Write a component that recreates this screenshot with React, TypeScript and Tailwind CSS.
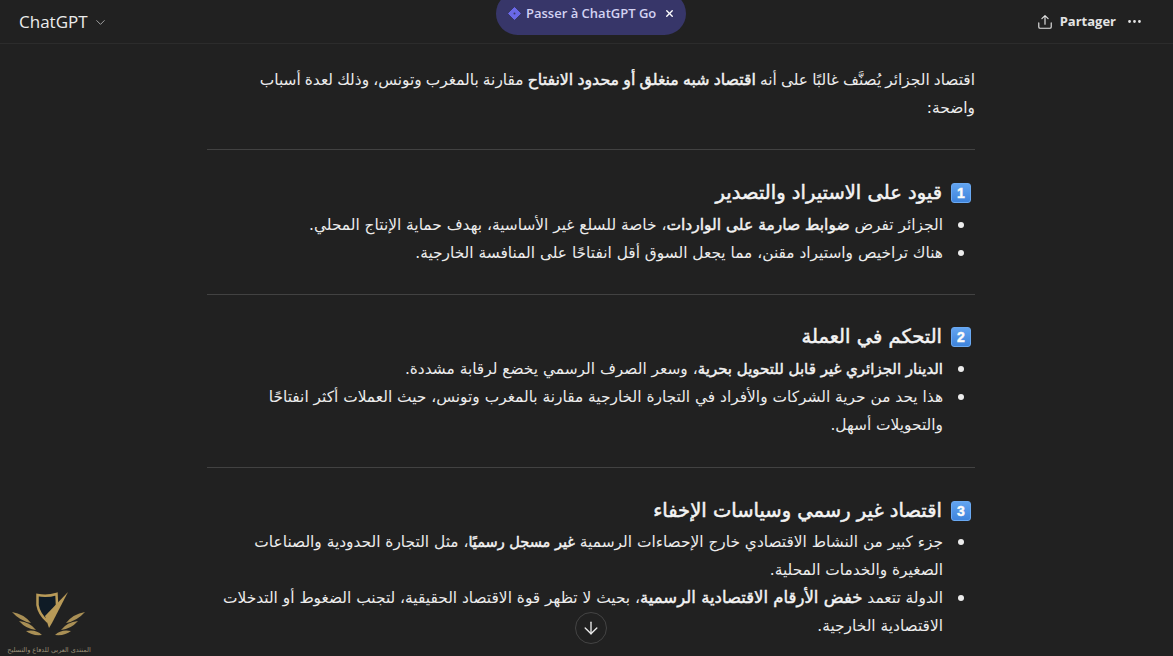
import { ChevronDown, ArrowDown, X, MoreHorizontal } from "lucide-react";

const NumBadge = ({ n }: { n: number }) => (
  <span className="mr-[4px] inline-flex h-[20px] w-[20px] shrink-0 items-center justify-center rounded-[3px] border border-[#6aa9f2] bg-gradient-to-b from-[#62a4f0] to-[#3f84dc] font-['Liberation_Sans',sans-serif] text-[14px] font-bold leading-none text-white">
    {n}
  </span>
);

const Heading = ({ n, children }: { n: number; children: React.ReactNode }) => (
  <h3 className="flex h-[28px] items-center gap-[9px] text-[19.5px] font-normal leading-[28px] text-[#f3f3f3] [-webkit-text-stroke:0.5px_#f3f3f3]">
    <NumBadge n={n} />
    <span>{children}</span>
  </h3>
);

const Strong = ({ children, size = "text-[15px]" }: { children: React.ReactNode; size?: string }) => (
  <span className={`${size} text-[#f3f3f3] [-webkit-text-stroke:0.45px_#f3f3f3]`}>{children}</span>
);

const Item = ({ children }: { children: React.ReactNode }) => (
  <li className="relative pr-[32px] leading-[28px]">
    <span className="absolute right-[11px] top-[11px] h-[6px] w-[6px] rounded-full bg-[#ececec]" />
    {children}
  </li>
);

const Divider = () => <hr className="border-t border-[#424242]" />;

const App = () => {
  return (
    <div className="relative h-[656px] w-[1173px] overflow-hidden bg-[#212121] font-['DejaVu_Sans',sans-serif] text-[#ececec]">
      {/* top bar */}
      <div className="relative flex h-[44px] items-center justify-between border-b border-[#2c2c2c] pl-[19px] pr-[30px] font-['Open_Sans',sans-serif]">
        <div className="flex items-center gap-[5px] text-[17px] text-[#ececec]">
          ChatGPT
          <ChevronDown size={15} strokeWidth={1.5} className="mt-[1px] text-[#a8a8a8]" />
        </div>
        <div className="absolute left-[496px] top-[-8px] flex h-[43px] w-[190px] items-center rounded-full bg-[#373669] pl-[12px] text-[13px] font-semibold text-[#d3d2f2]">
          <svg width="13" height="13" viewBox="0 0 13 13" className="mr-[5px]">
            <path d="M6.5 0.5 L12.5 6.5 L6.5 12.5 L0.5 6.5 Z" fill="#6a68e8" stroke="#6a68e8" strokeLinejoin="round" />
            <circle cx="6.5" cy="6.5" r="1" fill="#373669" />
          </svg>
          Passer à ChatGPT Go
          <X size={11} strokeWidth={3} className="ml-[8px] text-white" />
        </div>
        <div className="flex items-center">
          <svg width="16" height="18" viewBox="0 0 18 18" fill="none" stroke="#e4e4e4" strokeWidth="1.3" strokeLinecap="round" strokeLinejoin="round">
            <path d="M9 11.5V2M5.5 5.2 9 1.8l3.5 3.4M2 10v4.5a1.5 1.5 0 0 0 1.5 1.5h11a1.5 1.5 0 0 0 1.5-1.5V10" />
          </svg>
          <span className="ml-[7px] text-[13px] font-bold text-[#e4e4e4]">Partager</span>
          <MoreHorizontal size={17} strokeWidth={2} className="ml-[10px] text-[#e4e4e4]" />
        </div>
      </div>

      {/* conversation */}
      <div dir="rtl" className="ml-[207px] w-[768px] text-[15.4px] leading-[28px]">
        <p className="mt-[22px] [word-spacing:-0.8px]">
          اقتصاد الجزائر يُصنَّف غالبًا على أنه <Strong size="text-[15.8px]">اقتصاد شبه منغلق أو محدود الانفتاح</Strong> مقارنة بالمغرب وتونس، وذلك لعدة أسباب<br />واضحة:
        </p>
        <div className="mt-[27px]"><Divider /></div>

        <div className="mt-[29px]"><Heading n={1}>قيود على الاستيراد والتصدير</Heading></div>
        <ul className="mt-[4px]">
          <Item>الجزائر تفرض <Strong size="text-[15.5px]">ضوابط صارمة على الواردات</Strong>، خاصة للسلع غير الأساسية، بهدف حماية الإنتاج المحلي.</Item>
          <Item>هناك تراخيص واستيراد مقنن، مما يجعل السوق أقل انفتاحًا على المنافسة الخارجية.</Item>
        </ul>
        <div className="mt-[27px]"><Divider /></div>

        <div className="mt-[28px]"><Heading n={2}>التحكم في العملة</Heading></div>
        <ul className="mt-[4px]">
          <Item><Strong>الدينار الجزائري غير قابل للتحويل بحرية</Strong>، وسعر الصرف الرسمي يخضع لرقابة مشددة.</Item>
          <Item>هذا يحد من حرية الشركات والأفراد في التجارة الخارجية مقارنة بالمغرب وتونس، حيث العملات أكثر انفتاحًا<br />والتحويلات أسهل.</Item>
        </ul>
        <div className="mt-[28px]"><Divider /></div>

        <div className="mt-[29px]"><Heading n={3}>اقتصاد غير رسمي وسياسات الإخفاء</Heading></div>
        <ul className="mt-[3px]">
          <Item>جزء كبير من النشاط الاقتصادي خارج الإحصاءات الرسمية <Strong size="text-[14.5px]">غير مسجل رسميًا</Strong>، مثل التجارة الحدودية والصناعات<br />الصغيرة والخدمات المحلية.</Item>
          <Item>الدولة تتعمد <Strong size="text-[16.5px]">خفض الأرقام الاقتصادية الرسمية</Strong>، بحيث لا تظهر قوة الاقتصاد الحقيقية، لتجنب الضغوط أو التدخلات<br />الاقتصادية الخارجية.</Item>
        </ul>
      </div>

      {/* scroll down button */}
      <button className="absolute left-[575px] top-[612px] flex h-[32px] w-[32px] items-center justify-center rounded-full border border-[#444444] bg-[#212121]">
        <ArrowDown size={20} strokeWidth={1.6} className="text-[#ececec]" />
      </button>

      {/* forum watermark */}
      <div className="absolute left-0 top-[590px] flex w-[98px] flex-col items-center">
        <svg width="98" height="50" viewBox="0 0 98 50">
          <path d="M37.5 5 Q47 7 56.5 4 L57 15 Q55 24 47 31 Q39 24 37.5 15 Z" fill="#0f1b26" stroke="#b89a58" strokeWidth="2.5" />
          <path d="M45 26 L68 2 L52 33 L49 38 Z" fill="#b89a58" />
          <path d="M12 22 Q24 24 31 33 Q20 31 12 22ZM19 31 Q30 32 36 40 Q26 39 19 31ZM26 41 Q36 39 42 45 Q32 46 26 41Z" fill="#a98f55" />
          <path d="M85 22 Q73 24 66 33 Q77 31 85 22ZM78 31 Q67 32 61 40 Q71 39 78 31ZM71 41 Q61 39 55 45 Q65 46 71 41Z" fill="#a98f55" />
        </svg>
        <span dir="rtl" className="mt-[5px] whitespace-nowrap text-[6.5px] leading-[10px] text-[#9a9078]">المنتدى العربي للدفاع والتسليح</span>
      </div>
    </div>
  );
};

export default App;
